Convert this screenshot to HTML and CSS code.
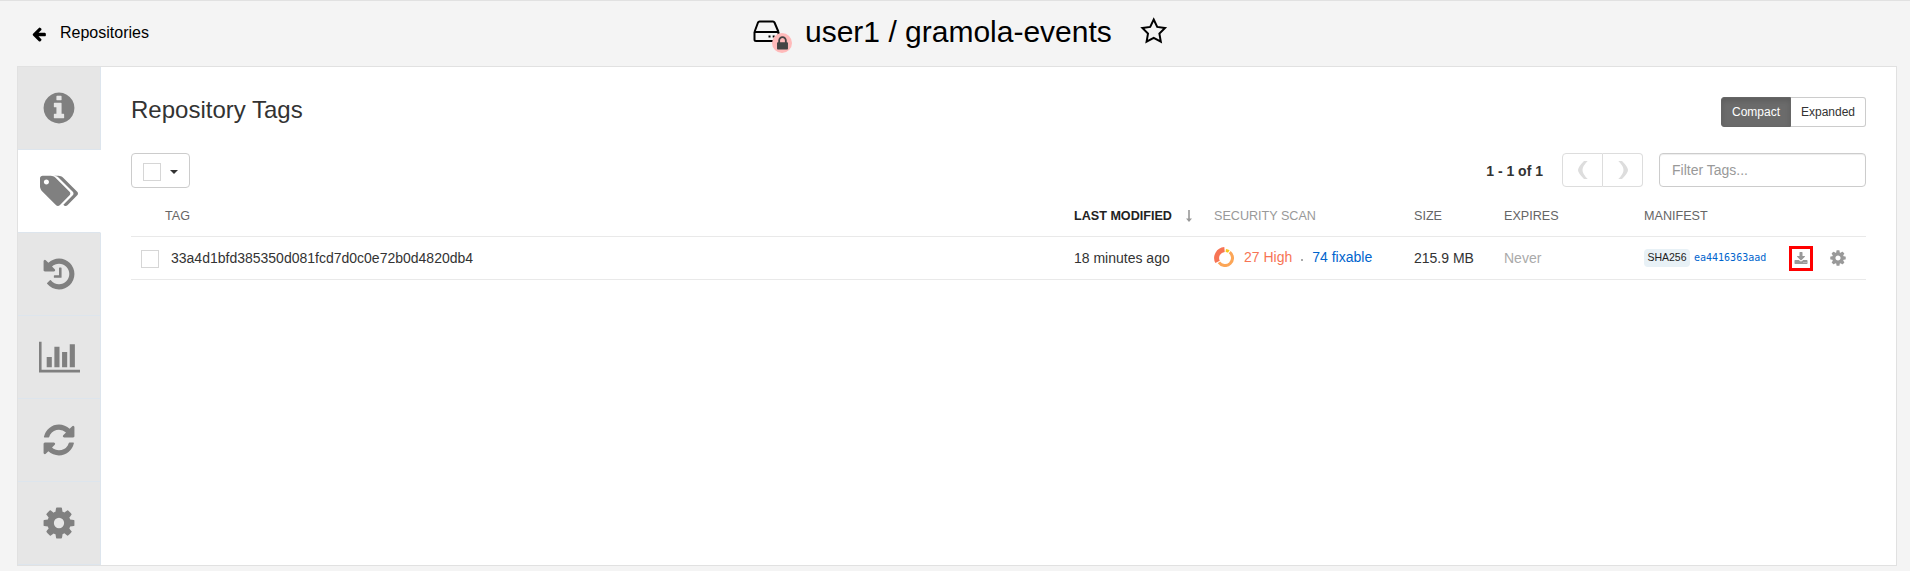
FILE: index.html
```html
<!DOCTYPE html>
<html lang="en">
<head>
<meta charset="utf-8">
<title>user1 / gramola-events</title>
<link rel="stylesheet" href="styles.css">
</head>
<body>
<svg class="defs" width="0" height="0">
  <symbol id="cog" viewBox="0 0 1792 1792"><path d="M1152 896q0-106-75-181t-181-75-181 75-75 181 75 181 181 75 181-75 75-181zm512-109v222q0 12-8 23t-20 13l-185 28q-19 54-39 91 35 50 107 138 10 12 10 25t-9 23q-27 37-99 108t-94 71q-12 0-26-9l-138-108q-44 23-91 38-16 136-29 186-7 28-36 28h-222q-14 0-24.500-8.500t-11.500-21.500l-28-184q-49-16-90-37l-141 107q-10 9-25 9-14 0-25-11-126-114-165-168-7-10-7-23 0-12 8-23 15-21 51-66.500t54-70.500q-27-50-41-99l-183-27q-13-2-21-12.500t-8-23.500v-222q0-12 8-23t19-13l186-28q14-46 39-92-40-57-107-138-10-12-10-24 0-10 9-23 26-36 98.500-107.500t94.500-71.500q13 0 26 10l138 107q44-23 91-38 16-136 29-186 7-28 36-28h222q14 0 24.500 8.500t11.500 21.500l28 184q49 16 90 37l142-107q9-9 24-9 13 0 25 10 129 119 165 170 7 8 7 22 0 12-8 23-15 21-51 66.500t-54 70.500q26 50 41 98l183 28q13 2 21 12.500t8 23.500z"/></symbol>
</svg>
<header class="top">
  <a class="back"><svg width="16" height="16" viewBox="0 0 1792 1792"><path d="M1664 896v128q0 53-32.500 90.500t-84.500 37.500h-704l293 294q38 36 38 90t-38 90l-75 76q-37 37-90 37-52 0-91-37l-651-652q-37-37-37-90 0-52 37-91l651-650q38-38 91-38 52 0 90 38l75 74q38 38 38 91t-38 91l-293 293h704q52 0 84.500 37.500t32.500 90.500z"/></svg><span>Repositories</span></a>
  <h1 class="title">
    <span class="repo"><svg class="drive" width="28" height="24" viewBox="0 0 28 24" fill="none" stroke="#000" stroke-width="2" stroke-linejoin="round"><path d="M1.500 12L5 2.500Q5.500 1.500 6.500 1.500H20Q21 1.500 21.500 2.500L25.500 12M1.500 12H25.500M1.500 12V19.500Q1.500 21 3 21H24Q25.500 21 25.500 19.500V12"/><path stroke-dasharray="2 2.200" d="M15.500 16.500H23"/></svg><span class="badge"><svg width="17" height="17" viewBox="0 0 1792 1792"><path d="M640 768h512v-192q0-106-75-181t-181-75-181 75-75 181v192zm832 96v576q0 40-28 68t-68 28h-960q-40 0-68-28t-28-68v-576q0-40 28-68t68-28h32v-192q0-184 132-316t316-132 316 132 132 316v192h32q40 0 68 28t28 68z"/></svg></span></span>
    <span class="name">user1 / gramola-events</span>
    <svg class="star" width="31" height="29" viewBox="0 0 31 29"><path fill="none" stroke="#000" stroke-width="2" d="M15.700 3.500L19.200 10.900L27 11.900L21.400 17.600L22.800 25.700L15.700 21.800L8.600 25.700L10 17.600L4.400 11.900L12.200 10.900Z"/></svg>
  </h1>
</header>
<main class="panel">
  <nav class="tabs">
    <a class="tab"><svg width="36" height="36" viewBox="0 0 1792 1792"><path d="M1152 1376v-160q0-14-9-23t-23-9h-96v-512q0-14-9-23t-23-9h-320q-14 0-23 9t-9 23v160q0 14 9 23t23 9h96v320h-96q-14 0-23 9t-9 23v160q0 14 9 23t23 9h448q14 0 23-9t9-23zm-128-896v-160q0-14-9-23t-23-9h-192q-14 0-23 9t-9 23v160q0 14 9 23t23 9h192q14 0 23-9t9-23zm640 416q0 209-103 385.500t-279.500 279.500-385.500 103-385.500-103-279.500-279.500-103-385.500 103-385.500 279.500-279.500 385.500-103 385.500 103 279.500 279.500 103 385.500z"/></svg></a>
    <a class="tab active"><svg width="38" height="36" viewBox="-64 0 1900 1792"><path d="M384 448q0-53-37.500-90.500t-90.500-37.500-90.500 37.500-37.500 90.500 37.500 90.500 90.500 37.500 90.500-37.500 37.500-90.500zm1067 576q0 53-37 90l-491 492q-39 37-91 37-53 0-90-37l-715-716q-38-37-64.500-101t-26.500-117v-416q0-52 38-90t90-38h416q53 0 117 26.500t102 64.500l715 714q37 39 37 91zm384 0q0 53-37 90l-491 492q-39 37-91 37-36 0-59-14t-53-45l470-470q37-37 37-90 0-52-37-91l-715-714q-38-38-102-64.500t-117-26.500h224q53 0 117 26.500t102 64.500l715 714q37 39 37 91z"/></svg></a>
    <a class="tab"><svg width="36" height="36" viewBox="0 0 1792 1792"><path d="M1664 896q0 156-61 298t-164 245-245 164-298 61q-172 0-327-72.500t-264-204.500q-7-10-6.500-22.500t8.500-20.500l137-138q10-9 25-9 16 2 23 12 73 95 179 147t225 52q104 0 198.500-40.500t163.500-109.500 109.500-163.500 40.500-198.500-40.500-198.500-109.500-163.500-163.500-109.500-198.500-40.500q-98 0-188 35.500t-160 101.500l137 138q31 30 14 69-17 40-59 40h-448q-26 0-45-19t-19-45v-448q0-42 40-59 39-17 69 14l130 129q107-101 244.500-156.500t284.500-55.500q156 0 298 61t245 164 164 245 61 298zm-640-288v448q0 14-9 23t-23 9h-320q-14 0-23-9t-9-23v-64q0-14 9-23t23-9h224v-352q0-14 9-23t23-9h64q14 0 23 9t9 23z"/></svg></a>
    <a class="tab"><svg width="41" height="36" viewBox="0 0 2048 1792"><path d="M640 896v512h-256v-512h256zm384-512v1024h-256v-1024h256zm1024 1152v128h-2048v-1536h128v1408h1920zm-640-896v768h-256v-768h256zm384-384v1152h-256v-1152h256z"/></svg></a>
    <a class="tab"><svg width="36" height="36" viewBox="0 0 1792 1792"><path d="M1639 1056q0 5-1 7-64 268-268 434.500t-478 166.500q-146 0-282.500-55t-243.500-157l-129 129q-19 19-45 19t-45-19-19-45v-448q0-26 19-45t45-19h448q26 0 45 19t19 45-19 45l-137 137q71 66 161 102t187 36q134 0 250-65t186-179q11-17 53-117 8-23 30-23h192q13 0 22.500 9.500t9.500 22.500zm25-800v448q0 26-19 45t-45 19h-448q-26 0-45-19t-19-45 19-45l138-138q-148-137-349-137-134 0-250 65t-186 179q-11 17-53 117-8 23-30 23h-199q-13 0-22.500-9.500t-9.500-22.500v-7q65-268 270-434.500t480-166.500q146 0 284 55.500t245 156.500l130-129q19-19 45-19t45 19 19 45z"/></svg></a>
    <a class="tab"><svg width="36" height="36"><use href="#cog"/></svg></a>
  </nav>
  <section class="content">
    <div class="heading">
      <h2>Repository Tags</h2>
      <div class="toggle"><button class="on">Compact</button><button>Expanded</button></div>
    </div>
    <div class="toolbar">
      <button class="select"><span class="check"></span><span class="caret"></span></button>
      <span class="count">1 - 1 of 1</span>
      <div class="pager"><button><svg width="10" height="18" viewBox="0 0 10 18"><path d="M6 0H9.700Q4.500 5 4.500 9T9.700 18H6Q0 12 0 9T6 0Z"/></svg></button><button><svg width="10" height="18" viewBox="0 0 10 18"><path d="M4 0H.3Q5.500 5 5.500 9T.3 18H4Q10 12 10 9T4 0Z"/></svg></button></div>
      <input class="filter" type="text" placeholder="Filter Tags...">
    </div>
    <div class="table">
      <div class="row head">
        <span class="c-check"></span><span class="c-tag">TAG</span>
        <span class="sorted">LAST MODIFIED<svg width="6" height="12" viewBox="0 0 6 12"><path d="M2.200 0H3.800V8.500H6L3 12L0 8.500H2.200Z"/></svg></span>
        <span class="scan-head">SECURITY SCAN</span><span>SIZE</span><span>EXPIRES</span><span>MANIFEST</span><span></span><span></span>
      </div>
      <div class="row item">
        <span class="c-check"><span class="check"></span></span><span class="tag">33a4d1bfd385350d081fcd7d0c0e72b0d4820db4</span>
        <span>18 minutes ago</span>
        <span class="scan"><svg width="20" height="20" viewBox="0 0 20 20" fill="none"><path stroke="#fca657" stroke-width="3" d="M15.700 5.200A7.500 7.500 0 1 1 4.900 15.400"/><path stroke="#f77454" stroke-width="5" d="M10.500 2.500A8.500 8.500 0 0 0 3.600 14.900"/><path stroke="#f8ca1c" stroke-width="3" d="M11.800 3.500Q13.600 3.700 14.800 4.500"/></svg><span class="high">27 High</span><span class="dot"></span><a class="fix">74 fixable</a></span>
        <span>215.9 MB</span><span class="never">Never</span>
        <span class="manifest"><span class="sha">SHA256</span><a>ea4416363aad</a></span>
        <span class="download"><svg width="14" height="14" viewBox="0 0 1792 1792"><path d="M1344 1344q0-26-19-45t-45-19-45 19-19 45 19 45 45 19 45-19 19-45zm256 0q0-26-19-45t-45-19-45 19-19 45 19 45 45 19 45-19 19-45zm128-224v320q0 40-28 68t-68 28h-1472q-40 0-68-28t-28-68v-320q0-40 28-68t68-28h465l135 136q58 56 136 56t136-56l136-136h464q40 0 68 28t28 68zm-325-569q17 41-14 70l-448 448q-18 19-45 19t-45-19l-448-448q-31-29-14-70 17-39 59-39h256v-448q0-26 19-45t45-19h256q26 0 45 19t19 45v448h256q42 0 59 39z"/></svg></span>
        <span class="gear"><svg width="18" height="18"><use href="#cog"/></svg></span>
      </div>
    </div>
  </section>
</main>
</body>
</html>
```
FILE: styles.css
```css
* { box-sizing: border-box; }
body { margin: 0; height: 571px; overflow: hidden; background: #f4f4f4; border-top: 1px solid #e1e1e1; font: 14px/20px "Liberation Sans", Arial, sans-serif; color: #333; }
svg { display: block; flex: none; }
.defs { position: absolute; }
button { font: inherit; color: inherit; padding: 0; margin: 0; background: #fff; border: 1px solid #ccc; display: flex; align-items: center; justify-content: center; }
.top { height: 65px; display: grid; grid-template-columns: 721px auto; padding-left: 31px; color: #000; }
.back { display: flex; align-items: flex-start; padding-top: 22px; font-size: 16px; }
.back svg { margin-top: 3px; }
.back span { margin-left: 13px; }
.title { margin: 0; font-size: 30px; font-weight: 400; line-height: 36px; display: flex; align-items: flex-start; padding-top: 13px; }
.repo { position: relative; width: 53px; padding: 6px 0 0 1px; }
.badge { position: absolute; left: 20px; top: 19px; width: 20px; height: 20px; border-radius: 50%; background: #ffbaba; display: flex; align-items: center; justify-content: center; fill: #444; }
.name { white-space: nowrap; width: 333px; }
.star { margin-top: 2px; }
.panel { display: flex; width: 1880px; height: 500px; margin-left: 17px; background: #fff; border: 1px solid #e1e1e1; }
.tabs { width: 83px; fill: #808080; flex: none; }
.tab { display: flex; height: 83px; align-items: center; justify-content: center; background: #e6e6e6; border-right: 1px solid #dde5ed; border-bottom: 1px solid #dde5ed; }
.tab.active { background: #fff; border-right-color: #fff; }
.content { flex: 1; min-width: 0; padding: 30px 30px 0 30px; }
.heading { display: flex; justify-content: space-between; height: 56px; }
h2 { margin: 0; font-size: 24px; line-height: 26px; font-weight: 400; }
.toggle { display: flex; font-size: 12px; height: 30px; }
.toggle button { width: 75px; border-radius: 0 3px 3px 0; border-left: 0; }
.toggle .on { width: 70px; background: #6b6b6b; color: #fff; border: 1px solid #666; border-radius: 3px 0 0 3px; box-shadow: inset 0 3px 5px rgba(0,0,0,.125); }
.toolbar { display: flex; align-items: center; height: 34px; }
.select { align-self: flex-start; width: 59px; height: 35px; border-radius: 4px; }
.check { width: 18px; height: 18px; border: 1px solid #d6d6d6; background: #fff; }
.select .check { margin-top: 2px; }
.caret { border: 4px solid transparent; border-top-color: #333; border-bottom: 0; margin: 3px 0 0 9px; }
.count { margin-left: auto; font-weight: 700; padding-top: 2px; }
.pager { display: flex; margin-left: 19px; fill: #ddd; }
.pager button { width: 41px; height: 34px; border-color: #ddd; border-radius: 4px 0 0 4px; }
.pager button + button { width: 40px; border-left: 0; border-radius: 0 4px 4px 0; }
.filter { margin-left: 16px; width: 207px; height: 34px; border: 1px solid #ccc; border-radius: 4px; padding: 0 12px; font: inherit; box-shadow: inset 0 1px 1px rgba(0,0,0,.075); }
.filter::placeholder { color: #999; }
.row { display: grid; grid-template-columns: 34px 909px 140px 200px 90px 140px 145px 40px 36px; align-items: center; border-bottom: 1px solid #e9e9e9; white-space: nowrap; }
.head { height: 50px; font-size: 12.600px; color: #666; padding-top: 8px; }
.sorted { display: flex; align-items: center; font-weight: 700; font-size: 12.600px; color: #222; }
.sorted svg { margin-left: 14px; fill: #999; }
.scan-head { color: #999; }
.item { height: 43px; }
.c-check { padding-left: 10px; display: flex; }
.c-check .check { margin-top: 1px; }
.tag { padding-left: 6px; }
.scan { display: flex; align-items: center; padding-bottom: 2px; }
.high { color: #f77454; margin-left: 10px; }
.dot { width: 2px; height: 2px; background: #aaa; margin: 6px 9px 0 9px; }
.fix { color: #0064cd; }
.never { color: #aaa; }
.manifest { display: flex; align-items: center; }
.sha { background: #e8f1f6; border-radius: 4px; color: #222; width: 46px; height: 18px; font-size: 10.500px; line-height: 17px; text-align: center; }
.manifest a { color: #0064cd; font: 10px/18px "DejaVu Sans Mono", monospace; margin-left: 4px; }
.download { width: 24px; height: 25px; border: 3px solid #f00; display: flex; align-items: center; justify-content: center; fill: #999; margin-top: 1px; }
.gear { fill: #999; }
```
